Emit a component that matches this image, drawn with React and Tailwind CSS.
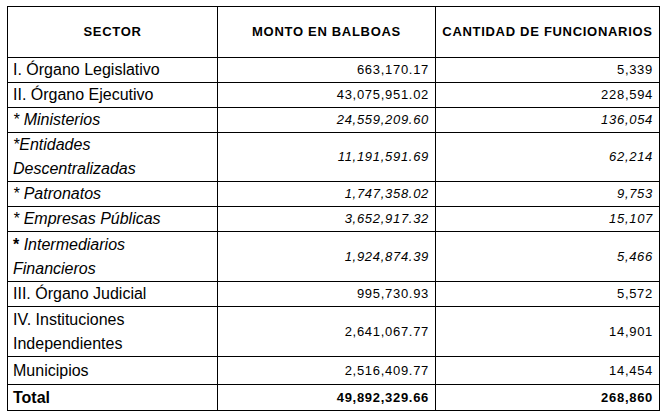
const rows = [
  { sector: "I. Órgano Legislativo", monto: "663,170.17", cant: "5,339", h: "h-[25px]" },
  { sector: "II. Órgano Ejecutivo", monto: "43,075,951.02", cant: "228,594", h: "h-[25px]" },
  { sector: "* Ministerios", monto: "24,559,209.60", cant: "136,054", h: "h-[25px]", italic: true },
  { sector: "*Entidades Descentralizadas", monto: "11,191,591.69", cant: "62,214", h: "h-[49px]", italic: true },
  { sector: "* Patronatos", monto: "1,747,358.02", cant: "9,753", h: "h-[25px]", italic: true },
  { sector: "* Empresas Públicas", monto: "3,652,917.32", cant: "15,107", h: "h-[25px]", italic: true },
  { sector: "Intermediarios Financieros", star: true, monto: "1,924,874.39", cant: "5,466", h: "h-[50px]", italic: true },
  { sector: "III. Órgano Judicial", monto: "995,730.93", cant: "5,572", h: "h-[24px]" },
  { sector: "IV. Instituciones Independientes", monto: "2,641,067.77", cant: "14,901", h: "h-[50px]" },
  { sector: "Municipios", monto: "2,516,409.77", cant: "14,454", h: "h-[28px]" },
];

export default function App() {
  return (
    <div className="bg-white w-[668px] h-[418px] pt-[6px] pl-[7px] font-['Liberation_Sans',Arial,sans-serif] text-black">
      <table className="border-collapse table-fixed w-[652px]">
        <colgroup>
          <col className="w-[210px]" />
          <col className="w-[218px]" />
          <col className="w-[224px]" />
        </colgroup>
        <thead>
          <tr className="h-[51px]">
            <th className="border border-black text-center text-[13px] font-bold tracking-[0.7px]">SECTOR</th>
            <th className="border border-black text-center text-[13px] font-bold tracking-[0.7px]">MONTO EN BALBOAS</th>
            <th className="border border-black text-center text-[13px] font-bold tracking-[0.7px]">CANTIDAD DE FUNCIONARIOS</th>
          </tr>
        </thead>
        <tbody>
          {rows.map((r) => (
            <tr key={r.sector} className={r.h}>
              <td className={`border border-black pl-[5px] pr-2 text-[16px] leading-[24px] align-middle ${r.italic ? "italic" : ""}`}>
                {r.star && <span className="not-italic font-bold">* </span>}
                {r.sector}
              </td>
              <td className={`border border-black pr-[6px] text-right text-[13px] tracking-[0.7px] align-middle ${r.italic ? "italic" : ""}`}>
                {r.monto}
              </td>
              <td className={`border border-black pr-[6px] text-right text-[13px] tracking-[0.7px] align-middle ${r.italic ? "italic" : ""}`}>
                {r.cant}
              </td>
            </tr>
          ))}
          <tr className="h-[26px]">
            <td className="border border-black pl-[5px] text-[16px] font-bold">Total</td>
            <td className="border border-black pr-[6px] text-right text-[13px] font-bold tracking-[0.7px]">49,892,329.66</td>
            <td className="border border-black pr-[6px] text-right text-[13px] font-bold tracking-[0.7px]">268,860</td>
          </tr>
        </tbody>
      </table>
    </div>
  );
}
